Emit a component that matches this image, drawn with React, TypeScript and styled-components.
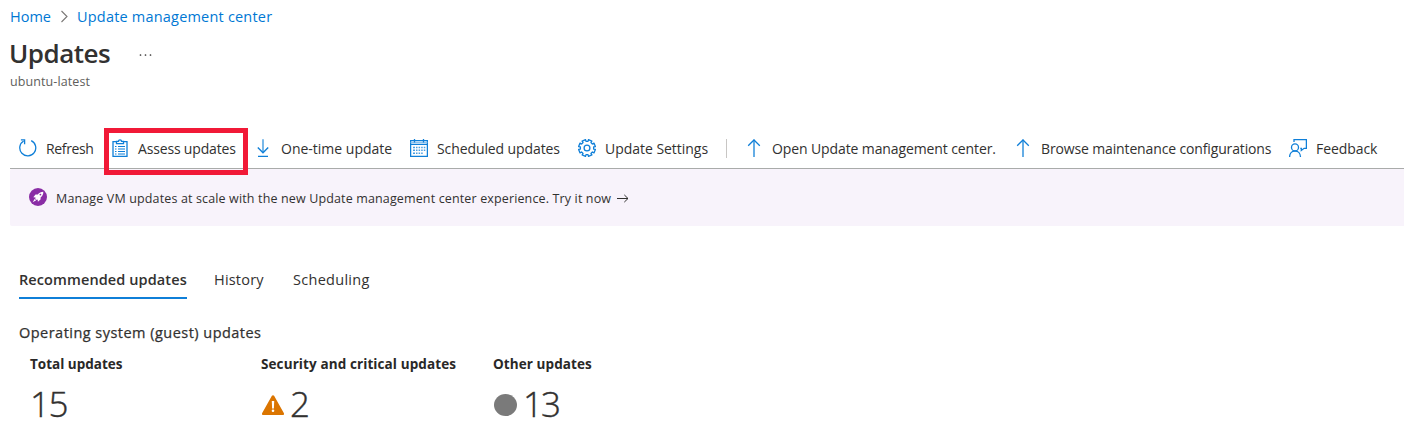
import React from "react";
import styled, { createGlobalStyle } from "styled-components";

const GlobalStyle = createGlobalStyle`
  *, *::after { box-sizing: border-box; }
  body {
    margin: 0;
    background: #fff;
    color: #323130;
    font-family: "Segoe UI", "Open Sans", "Noto Sans", sans-serif;
    overflow: hidden;
  }
`;

const Page = styled.main`
  height: 430px;
  padding-left: 10px;
  overflow: hidden;
`;

const Text = styled.span<{ $w?: number; $ls?: number }>`
  display: block;
  flex: none;
  white-space: nowrap;
  width: ${(p) => (p.$w ? `${p.$w}px` : "auto")};
  letter-spacing: ${(p) => p.$ls ?? 0}px;
`;

const Breadcrumb = styled.nav`
  display: flex;
  align-items: center;
  height: 33px;
  font-size: 14.5px;
  color: #0078d4;
  svg { margin: 0 8px 0 8px; }
`;

const Heading = styled.header`
  display: flex;
  align-items: center;
  height: 40px;
  svg { margin-top: 4px; }
`;

const Title = styled.h1`
  margin: 0 0 0 -1px;
  width: 130px;
  font-size: 26px;
  font-weight: 600;
  line-height: 40px;
  letter-spacing: -0.5px;
`;

const Subtitle = styled.div`
  height: 55px;
  font-size: 12.5px;
  line-height: 17px;
  color: #605e5c;
`;

const Toolbar = styled.div`
  display: flex;
  align-items: center;
  gap: 18px;
  height: 41px;
  padding-left: 9px;
  border-bottom: 1px solid #a9abaa;
`;

const Command = styled.div<{ $highlight?: boolean }>`
  position: relative;
  display: flex;
  align-items: center;
  gap: 9px;
  flex: none;
  font-size: 14px;
  line-height: 20px;
  span { padding-top: 1px; }
  svg { flex: none; }
  ${(p) =>
    p.$highlight &&
    `&::after {
      content: "";
      position: absolute;
      left: -7px;
      top: -10px;
      width: 144px;
      height: 47px;
      border: 5px solid #f11937;
      z-index: 1;
    }`}
`;

const Divider = styled.div`
  width: 1px;
  height: 19px;
  background: #c8c6c4;
`;

const Banner = styled.div`
  display: flex;
  align-items: center;
  gap: 9px;
  height: 57px;
  padding: 0 0 2px 19px;
  margin-bottom: 36px;
  background: #f8f3fb;
  border-radius: 2px 0 0 2px;
  font-size: 12.5px;
`;

const BannerText = styled.div`
  display: flex;
  align-items: center;
  gap: 5px;
  padding-top: 4px;
`;

const Tabs = styled.div`
  display: flex;
  gap: 27px;
  padding-left: 9px;
  height: 56px;
`;

const Tab = styled.div<{ $active?: boolean }>`
  height: 37px;
  font-size: 14.5px;
  line-height: 36px;
  font-weight: ${(p) => (p.$active ? 600 : 400)};
  border-bottom: 2px solid ${(p) => (p.$active ? "#0f7fd8" : "transparent")};
`;

const SectionTitle = styled.h2`
  margin: 0;
  padding-left: 9px;
  height: 36px;
  font-size: 14.5px;
  font-weight: 500;
  line-height: 30px;
  -webkit-text-stroke: 0.25px #323130;
`;

const Stats = styled.div`
  display: grid;
  grid-template-columns: 231px 232px 200px;
  padding-left: 20px;
`;

const StatName = styled.div`
  font-size: 13.5px;
  font-weight: 700;
  line-height: 20px;
  color: #292827;
`;

const StatValue = styled.div`
  display: flex;
  align-items: center;
  gap: 6px;
  height: 60px;
  font-size: 35px;
  font-weight: 300;
  -webkit-text-stroke: 0.4px #323130;
  span { margin-top: -1px; }
  svg { margin: 1px 0 0 1px; }
`;

const BLUE = "#0f7fd8";

const Icon = ({ children, size = 18 }: { children: React.ReactNode; size?: number }) => (
  <svg width={size} height={size} viewBox="0 0 18 18" fill="none" stroke={BLUE} strokeWidth="1.3">
    {children}
  </svg>
);

const RefreshIcon = () => (
  <Icon>
    <path d="M12.2 1.6A8 8 0 1 1 4.6 2" />
    <path d="M1.9.8h3.7v4.4" />
  </Icon>
);

const ClipboardIcon = () => (
  <Icon>
    <path d="M5 2.7H2v14.7h14V2.7h-3" />
    <path d="M5.5 4.6V2.3h2a1.5 1.5 0 0 1 3 0h2v2.3z" />
    <path d="M4 7.5h1.5M7 7.5h7M4 10h1.5M7 10h7M4 12.5h1.5M7 12.5h7M4 15h1.5M7 15h7" strokeWidth="1.1" />
  </Icon>
);

const DownloadIcon = () => (
  <Icon>
    <path d="M9 .3v13.2" stroke="#58a7e4" strokeWidth="1.6" />
    <path d="M3.8 8.5 9 13.7l5.2-5.2M4 17.4h10" strokeWidth="1.4" />
  </Icon>
);

const CalendarIcon = () => (
  <Icon>
    <path d="M.6 1.6h16.8v15.8H.6zM.6 5.4h16.8" />
    <path d="M.6 3.5h16.8" stroke="#8cc3ee" />
    <path d="M4.5 0v3.4M13.5 0v3.4" />
    <path
      d="M3 8.5h2M6 8.5h1.5M8.6 8.5h1.5M11.2 8.5h1.5M13.8 8.5h1.5M3 11.2h2M6 11.2h1.5M8.6 11.2h1.5M11.2 11.2h1.5M13.8 11.2h1.5M3 14.3h2M6 14.3h1.5M8.6 14.3h1.5M11.2 14.3h1.5"
      stroke="#4a9fe2"
      strokeWidth="1.6"
    />
  </Icon>
);

const teeth = Array.from({ length: 8 }, (_, i) => {
  const c = (i * Math.PI) / 4 - Math.PI / 2;
  return [
    [-0.24, 6.7],
    [-0.22, 8.5],
    [0.22, 8.5],
    [0.24, 6.7],
  ]
    .map(([a, r]) => `${(9 + r * Math.cos(c + a)).toFixed(2)},${(9 + r * Math.sin(c + a)).toFixed(2)}`)
    .join(" ");
}).join(" ");

const GearIcon = () => (
  <Icon>
    <polygon points={teeth} strokeLinejoin="round" transform="rotate(22.5 9 9)" />
    <circle cx="9" cy="9" r="2.9" />
  </Icon>
);

const UpIcon = () => (
  <Icon>
    <path d="M9 .8v17.2" stroke="#3f99df" strokeWidth="1.6" />
    <path d="M3.2 6.8 9 1l5.8 5.8" />
  </Icon>
);

const FeedbackIcon = () => (
  <Icon>
    <circle cx="6" cy="8.4" r="3.5" />
    <path d="M.6 18c0-3.6 2.3-6 5.4-6s5.5 2.4 5.500 6" />
    <path d="M5 3V.7h12.400v8.600h-2.300L12.300 11.500V9.300h-1" />
  </Icon>
);

const ChevronIcon = () => (
  <svg width="9" height="13" viewBox="0 0 9 13" fill="none" stroke="#7a7876" strokeWidth="1.1">
    <path d="M1.5 1 7 6.5 1.5 12" />
  </svg>
);

const EllipsisIcon = () => (
  <svg width="13" height="4" viewBox="0 0 13 4" fill="#323130">
    <circle cx="1.5" cy="2" r=".85" />
    <circle cx="6.5" cy="2" r=".85" />
    <circle cx="11.5" cy="2" r=".85" />
  </svg>
);

const RocketIcon = () => (
  <svg width="18" height="18" viewBox="0 0 18 18">
    <circle cx="9" cy="9" r="9" fill="#8a2da5" />
    <path
      d="M14.3 3.7c-2.3 0-4 .8-5.5 2.7l-2.3.2-2.2 2.6 2.3.2-.4 1.1 1.4 1.4 1.1-.4.2 2.3 2.6-2.2.2-2.3c1.9-1.5 2.7-3.3 2.6-5.6z"
      fill="#fff"
    />
    <path d="M5.8 10.8 3.7 14.3l3.5-2.1z" fill="#fff" />
    <circle cx="11.4" cy="6.6" r=".9" fill="#8a2da5" />
  </svg>
);

const ArrowRightIcon = () => (
  <svg width="12" height="9" viewBox="0 0 12 9" fill="none" stroke="#323130" strokeWidth="1">
    <path d="M0 4.5h11M7.3.9 11 4.5 7.3 8.1" />
  </svg>
);

const WarningIcon = () => (
  <svg width="22" height="20" viewBox="0 0 22 20">
    <path d="M9.9.8a1.3 1.3 0 0 1 2.2 0l9.7 17.3a1.2 1.2 0 0 1-1.1 1.9H1.3a1.2 1.2 0 0 1-1.1-1.9z" fill="#db7500" />
    <path d="M9.8 6h2.4l-.3 7.5h-1.800z" fill="#fff" />
    <circle cx="11" cy="15.8" r="1.3" fill="#fff" />
  </svg>
);

const DotIcon = () => (
  <svg width="23" height="22" viewBox="0 0 23 22">
    <ellipse cx="11.5" cy="11" rx="11.5" ry="11" fill="#7a7a7a" />
  </svg>
);

export default function App() {
  return (
    <>
      <GlobalStyle />
      <Page>
        <Breadcrumb>
          <Text $w={42}>Home</Text>
          <ChevronIcon />
          <Text $ls={0.2}>Update management center</Text>
        </Breadcrumb>
        <Heading>
          <Title>Updates</Title>
          <EllipsisIcon />
        </Heading>
        <Subtitle>
          <Text $ls={0.1}>ubuntu-latest</Text>
        </Subtitle>
        <Toolbar>
          <Command><RefreshIcon /><Text $w={47} $ls={-0.35}>Refresh</Text></Command>
          <Command $highlight><ClipboardIcon /><Text $w={98} $ls={-0.17}>Assess updates</Text></Command>
          <Command><DownloadIcon /><Text $w={111}>One-time update</Text></Command>
          <Command><CalendarIcon /><Text $w={123} $ls={-0.1}>Scheduled updates</Text></Command>
          <Command><GearIcon /><Text $w={103} $ls={-0.03}>Update Settings</Text></Command>
          <Divider />
          <Command><UpIcon /><Text $w={224} $ls={-0.11}>Open Update management center.</Text></Command>
          <Command><UpIcon /><Text $w={230} $ls={-0.14}>Browse maintenance configurations</Text></Command>
          <Command><FeedbackIcon /><Text $w={62} $ls={-0.08}>Feedback</Text></Command>
        </Toolbar>
        <Banner>
          <RocketIcon />
          <BannerText>
            <Text $w={556} $ls={0.14}>Manage VM updates at scale with the new Update management center experience. Try it now</Text>
            <ArrowRightIcon />
          </BannerText>
        </Banner>
        <Tabs>
          <Tab $active><Text $w={168} $ls={0.1}>Recommended updates</Text></Tab>
          <Tab><Text $w={52} $ls={0.2}>History</Text></Tab>
          <Tab><Text $w={78} $ls={0.28}>Scheduling</Text></Tab>
        </Tabs>
        <SectionTitle><Text $ls={0.47}>Operating system (guest) updates</Text></SectionTitle>
        <Stats>
          <div>
            <StatName><Text>Total updates</Text></StatName>
            <StatValue><Text $ls={-1.6}>15</Text></StatValue>
          </div>
          <div>
            <StatName><Text $ls={0.1}>Security and critical updates</Text></StatName>
            <StatValue><WarningIcon /><Text>2</Text></StatValue>
          </div>
          <div>
            <StatName><Text $ls={0.08}>Other updates</Text></StatName>
            <StatValue><DotIcon /><Text $ls={-1.9}>13</Text></StatValue>
          </div>
        </Stats>
      </Page>
    </>
  );
}
